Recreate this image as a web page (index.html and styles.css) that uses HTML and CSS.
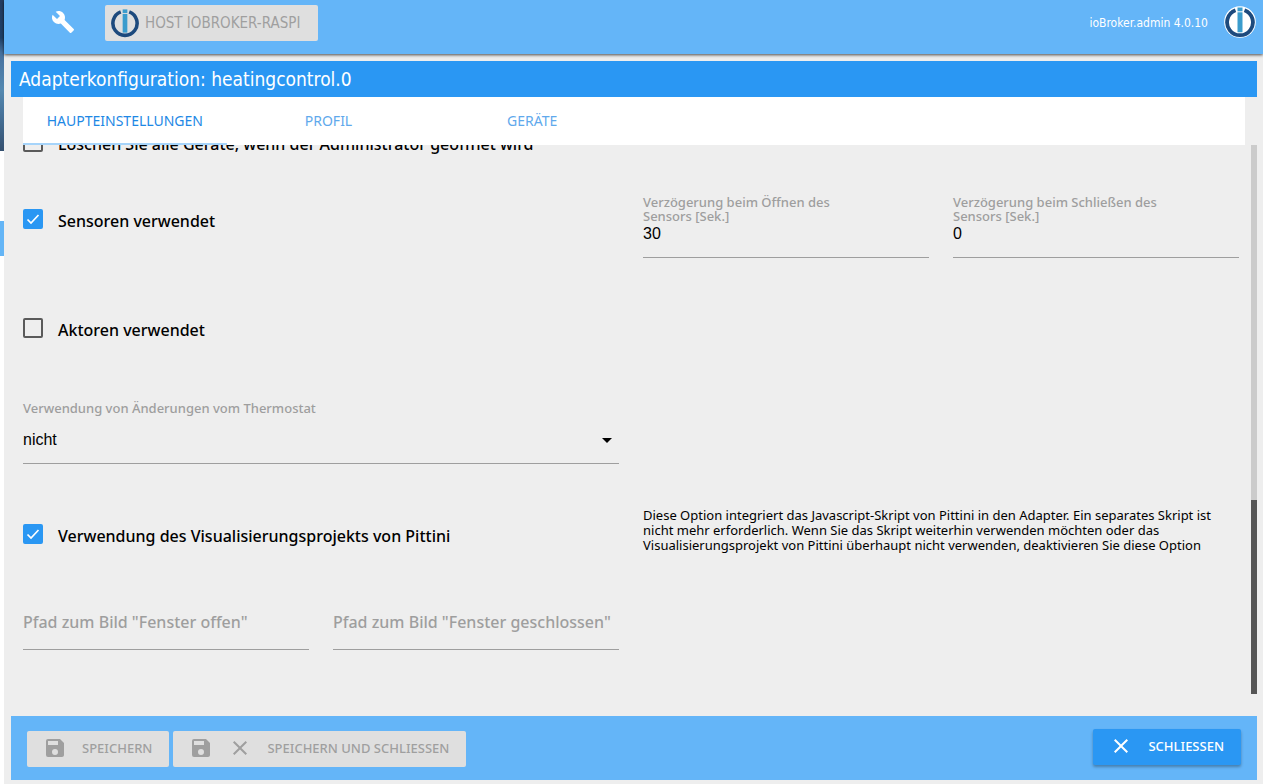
FILE: index.html
```html
<!DOCTYPE html>
<html lang="de">
<head>
<meta charset="utf-8">
<title>ioBroker.admin</title>
<link rel="stylesheet" href="styles.css">
</head>
<body>
<svg class="sprite" aria-hidden="true">
  <symbol id="logo" viewBox="0 0 32 32">
    <path d="M11.5 4.200A12.900 12.900 0 1 0 20.500 4.200" fill="none" stroke="#1d4a7d" stroke-width="3.800"/>
    <rect x="13.500" y="1.500" width="5" height="3.800" fill="#3a9ccd"/>
    <rect x="13.500" y="6.300" width="5" height="20" fill="#3a9ccd"/>
  </symbol>
  <symbol id="save" viewBox="0 0 24 24">
    <path d="M17 3H5a2 2 0 0 0-2 2v14a2 2 0 0 0 2 2h14c1.100 0 2-.9 2-2V7l-4-4zm-5 16a3 3 0 1 1 0-6 3 3 0 0 1 0 6zm3-10H5V5h10v4z"/>
  </symbol>
  <symbol id="close" viewBox="0 0 24 24">
    <path d="M19 6.410L17.590 5 12 10.590 6.410 5 5 6.410 10.590 12 5 17.590 6.410 19 12 13.410 17.590 19 19 17.590 13.410 12z"/>
  </symbol>
</svg>
<div class="app">
  <div class="rail"><div class="rail-photo"></div><div class="rail-active"></div></div>
  <div class="page">
    <header class="topbar">
      <button class="icon-button" type="button" aria-label="Einstellungen">
        <svg viewBox="0 0 24 24"><path d="M22.700 19l-9.100-9.100c.9-2.300.4-5-1.500-6.900-2-2-5-2.400-7.400-1.300L9 6 6 9 1.600 4.700C.4 7.100.9 10.100 2.900 12.100c1.900 1.900 4.600 2.400 6.900 1.500l9.100 9.100c.4.4 1 .4 1.400 0l2.300-2.300c.5-.4.5-1.100.1-1.400z"/></svg>
      </button>
      <button class="host" type="button" disabled><svg><use href="#logo"/></svg>HOST IOBROKER-RASPI</button>
      <span class="version">ioBroker.admin 4.0.10</span>
      <svg class="brand" viewBox="0 0 32 32"><circle cx="16" cy="16" r="15.800" fill="#fff"/><use href="#logo"/></svg>
    </header>
    <main class="panel">
      <h1 class="title">Adapterkonfiguration: heatingcontrol.0</h1>
      <nav class="tabs">
        <a class="tab tab-active" href="#haupt">HAUPTEINSTELLUNGEN</a>
        <a class="tab" href="#profil">PROFIL</a>
        <a class="tab" href="#geraete">GERÄTE</a>
      </nav>
      <div class="viewport">
        <form class="settings" id="haupt">
          <label class="check row-delete"><input type="checkbox"><span>Löschen Sie alle Geräte, wenn der Administrator geöffnet wird</span></label>
          <label class="check row-sensors"><input type="checkbox" checked><span>Sensoren verwendet</span></label>
          <div class="field delay-open">
            <label for="open">Verzögerung beim Öffnen des Sensors [Sek.]</label>
            <input id="open" type="text" value="30">
          </div>
          <div class="field delay-close">
            <label for="shut">Verzögerung beim Schließen des Sensors [Sek.]</label>
            <input id="shut" type="text" value="0">
          </div>
          <label class="check row-actors"><input type="checkbox"><span>Aktoren verwendet</span></label>
          <div class="field row-thermostat">
            <label for="thermo">Verwendung von Änderungen vom Thermostat</label>
            <div class="select">
              <select id="thermo"><option>nicht</option></select>
              <svg viewBox="0 0 24 24"><path d="M7 10l5 5 5-5z"/></svg>
            </div>
          </div>
          <label class="check row-pittini"><input type="checkbox" checked><span>Verwendung des Visualisierungsprojekts von Pittini</span></label>
          <p class="hint">Diese Option integriert das Javascript-Skript von Pittini in den Adapter. Ein separates Skript ist nicht mehr erforderlich. Wenn Sie das Skript weiterhin verwenden möchten oder das Visualisierungsprojekt von Pittini überhaupt nicht verwenden, deaktivieren Sie diese Option</p>
          <input class="path path-open" type="text" aria-label="Pfad zum Bild Fenster offen" placeholder='Pfad zum Bild "Fenster offen"'>
          <input class="path path-closed" type="text" aria-label="Pfad zum Bild Fenster geschlossen" placeholder='Pfad zum Bild "Fenster geschlossen"'>
        </form>
        <div class="track"><div class="thumb"></div></div>
      </div>
      <footer class="actions">
        <div class="save-group">
          <button class="btn" type="button" disabled><svg><use href="#save"/></svg>SPEICHERN</button>
          <button class="btn" type="button" disabled><svg><use href="#save"/></svg><svg><use href="#close"/></svg>SPEICHERN UND SCHLIESSEN</button>
        </div>
        <button class="btn btn-close" type="button"><svg><use href="#close"/></svg>SCHLIESSEN</button>
      </footer>
    </main>
  </div>
</div>
</body>
</html>
```
FILE: styles.css
```css
* { box-sizing: border-box; }
body {
  margin: 0;
  background: #fff;
  color: #000;
  font-family: "Noto Sans", "Open Sans", sans-serif;
  font-size: 16px;
  font-weight: 500;
}
button, input, select { font: inherit; color: inherit; margin: 0; border: 0; }
.sprite { display: none; }
svg { display: block; flex: none; fill: currentColor; }

.app { display: flex; height: 100vh; overflow: hidden; }
.rail { width: 4px; flex: none; }
.rail-photo { height: 151px; background: linear-gradient(#243d63, #1f4067 25%, #47719f 35%, #5589b0 60%, #47739b 75%, #34506f); }
.rail-active { height: 35px; margin-top: 70px; background: #64b5f6; }
.page { flex: 1; min-width: 0; display: flex; flex-direction: column; background: #eee; }

.topbar {
  height: 54px;
  flex: none;
  display: flex;
  align-items: flex-start;
  padding: 5px 7px 0 47px;
  background: #64b5f8;
  color: #fff;
  box-shadow: 0 1px 3px rgba(0, 0, 0, .7);
}
.icon-button { width: 24px; height: 34px; padding: 0; background: none; }
.icon-button svg { width: 24px; height: 24px; margin: 5px 0; }
.host {
  height: 36px;
  display: flex;
  align-items: center;
  gap: 5px;
  margin-left: 30px;
  padding: 0 18px 0 5px;
  border-radius: 2px;
  background: #dfdfdf;
  color: #9f9f9f;
  font-family: "DejaVu Sans Condensed", "DejaVu Sans", sans-serif;
  font-size: 15px;
}
.host svg { width: 30px; height: 30px; }
.version { margin-left: auto; font: 12px/36px "DejaVu Sans Condensed", "DejaVu Sans", sans-serif; }
.brand { width: 32px; height: 32px; margin-left: 16px; margin-top: 1px; }

.panel { flex: 1; min-height: 0; display: flex; flex-direction: column; padding: 7px 6px 4px 7px; }
.title {
  flex: none;
  margin: 0;
  padding: 0 8px;
  background: #2a97f3;
  color: #fff;
  font: 19px/36px "DejaVu Sans Condensed", "DejaVu Sans", sans-serif;
}
.tabs { flex: none; display: flex; margin: 0 12px; background: #fff; }
.tab {
  width: 16.666%;
  height: 48px;
  border-bottom: 2px solid transparent;
  color: #5fa9ec;
  font-size: 14px;
  font-weight: 400;
  line-height: 48px;
  text-align: center;
  text-decoration: none;
}
.tab-active { border-color: #a6d4fa; color: #1e88e5; }

.viewport { flex: 1; min-height: 0; display: flex; overflow: hidden; margin-bottom: 22px; }
.settings {
  flex: 1;
  display: grid;
  grid-template-columns: repeat(4, 1fr);
  column-gap: 24px;
  align-content: start;
  margin-top: -13px;
  padding: 0 12px;
}
.track { width: 6px; flex: none; display: flex; flex-direction: column; justify-content: flex-end; background: #cbcbcb; }
.thumb { height: 35.4%; background: #555; }

.check { grid-column: 1 / span 2; display: flex; align-items: flex-start; gap: 15px; line-height: 24px; }
.check input {
  appearance: none;
  width: 20px;
  height: 20px;
  flex: none;
  border: 2px solid #5a5a5a;
  border-radius: 2px;
}
.check input:checked {
  border-color: #2a97f3;
  background: #2a97f3 url("data:image/svg+xml,%3Csvg xmlns='http://www.w3.org/2000/svg' viewBox='0 0 16 16'%3E%3Cpath d='M2.500 8.500l3.500 3.500L13.500 4' fill='none' stroke='white' stroke-width='1.700'/%3E%3C/svg%3E") center / 16px no-repeat;
}
.row-delete { grid-column: 1 / -1; }
.row-sensors { margin-top: 53px; }
.row-actors { grid-column: 1 / -1; margin-top: 60px; }
.row-pittini { margin-top: 60px; }

.field label { display: block; color: #9e9e9e; font-size: 13px; line-height: 14px; }
.field input, .select select {
  display: block;
  width: 100%;
  border-bottom: 1px solid #9e9e9e;
  border-radius: 0;
  background: none;
  font-family: "Liberation Sans", sans-serif;
}
.field input { height: 35px; padding: 0 0 13px; }
.delay-open, .delay-close { margin-top: 39px; }
.delay-open label, .delay-close label { padding-right: 70px; }
.row-thermostat { grid-column: 1 / span 2; margin-top: 59px; }
.select { display: grid; align-items: center; }
.select > * { grid-area: 1 / 1; }
.select select { appearance: none; height: 49px; padding: 0; }
.select svg { width: 24px; height: 24px; justify-self: end; pointer-events: none; }
.hint { grid-column: 3 / span 2; margin: 44px 0 0; font-size: 13px; font-weight: 400; line-height: 15px; }
.path {
  grid-column: 1;
  width: 100%;
  min-width: 0;
  height: 55px;
  margin-top: 42px;
  padding: 0;
  border-bottom: 1px solid #9e9e9e;
  background: none;
}
.path-closed { grid-column: 2; }
.path::placeholder { color: #9e9e9e; opacity: 1; }

.actions {
  height: 64px;
  flex: none;
  display: flex;
  justify-content: space-between;
  padding: 13px 16px;
  background: #64b5f8;
}
.save-group { display: flex; gap: 4px; padding-top: 2px; }
.btn {
  height: 36px;
  display: flex;
  align-items: center;
  gap: 15px;
  padding: 0 17px 2px 16px;
  border-radius: 2px;
  background: #dfdfdf;
  color: #9f9f9f;
  font-size: 13px;
}
.btn svg { width: 24px; height: 24px; }
.btn-close { background: #2a97f3; color: #fff; box-shadow: 0 2px 3px rgba(0, 0, 0, .3); }
```
